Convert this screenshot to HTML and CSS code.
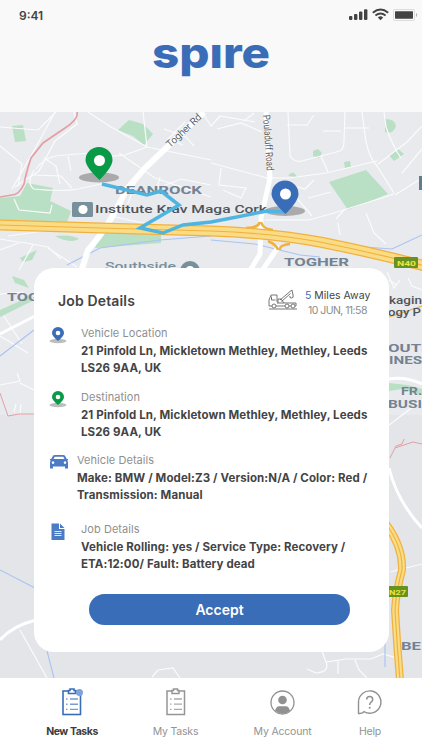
FILE: index.html
```html
<!DOCTYPE html>
<html lang="en">
<head>
  <meta charset="UTF-8">
  <meta name="viewport" content="width=device-width, initial-scale=1.0">
  <title>Spire</title>
  <link rel="stylesheet" href="styles.css">
</head>
<body>
  <div class="app">
    <!-- Header -->
    <header class="header">
      <div class="status-bar">
        <span class="time">9:41</span>
        <svg class="status-icons" width="70" height="14" viewBox="0 0 70 14">
          <g fill="#444">
            <rect x="1" y="8" width="3.4" height="4" rx="1"/>
            <rect x="6" y="6" width="3.4" height="6" rx="1"/>
            <rect x="11" y="3.6" width="3.4" height="8.4" rx="1"/>
            <rect x="16" y="1.2" width="3.4" height="10.8" rx="1"/>
            <path d="M29.8 9.400Q32.500 7.300 35.200 9.400L32.500 12.200z"/>
          </g>
          <path d="M24.800 4.800Q32.500 -1.600 40.200 4.800M27.400 7.600Q32.500 3.500 37.600 7.600" fill="none" stroke="#444" stroke-width="1.900"/>
          <rect x="45.500" y="1.500" width="21" height="11" rx="1.500" fill="none" stroke="#ddd"/>
          <rect x="47" y="3.300" width="18" height="7.400" rx=".6" fill="#444"/>
          <path d="M68 5v4q1-.5 1-2t-1-2" fill="#aaa"/>
        </svg>
      </div>
      <svg class="logo" width="126" height="50" viewBox="0 0 126 50" role="img" aria-label="spire">
        <text x="4" y="32" textLength="118" lengthAdjust="spacingAndGlyphs">spıre</text>
      </svg>
    </header>

    <main class="main">
      <!-- Map -->
      <svg class="map" width="422" height="566" viewBox="0 112 422 566">
        <rect x="0" y="112" width="422" height="566" fill="#e8eaed"/>
        <rect x="0" y="415" width="422" height="263" fill="#e3e5e9"/>
        <g fill="#b9dfc4">
          <path d="M27 183L53 188 50 201 71 211 67 222 0 220V198L20 196z"/>
          <path d="M12 126l11-1 3 16-11 1z"/>
          <path d="M118 130l11-10 14 4 10 10-9 11-11-9z"/>
          <path d="M100 232l61 3v8l-66 5z"/>
          <path d="M55 236q17-2 24 3-10 5-24-3M20 258l17-8-5 10-9 2z"/>
          <path d="M329 182l37-12 22 24-40 16z"/>
          <path d="M385 119q10 0 11 7-3 9-11 6zM389 155l9-6 6 5-10 7zM313 151l5-2 4 4-3 5-6-2zM344 162l6-1 1 6-6 1zM288 176q5-7 9 1z"/>
          <path d="M12 276l12 4 5 8-14-5zM0 310l18-8 12-8 2 7-16 8-16 8zM389 383l18 2 15 4v6l-20-6-13 2z"/>
        </g>
        <g class="street">
          <path d="M0 127l38 3 18-18M74 112l3 12-22 17-16 30-24 16M55 112L36 147 12 189M0 146l22 18-4 22"/>
          <path d="M36 169q10-14 29-14l25-2M34 170q-8 14 0 19 28 3 44 0l23-5M44 158l12 8 4 18M33 175l28 1 11 12M68 156l3 15"/>
          <path d="M88 112l23 15 36 20 64 13M147 147l-22 8-22 2M143 112l4 35M164 129l22 8 8 9M185 122l-17 17 15 6"/>
          <path d="M119 153l36 25 56 19M111 216l40 9M156 189l25-10 30 6M136 181l-9 25M160 177l-3 12"/>
          <path d="M14 199l5 11 31 3 2-8M8 236l43-6M0 250l21-8 27 5 13 12M33 245l-14 25M48 248l29 19M0 239l18 3"/>
          <path d="M204 115l7 11 9-10 35 6M217 129l24-6 21 9M244 121l10-8M211 163l60 16M221 168l-2 17 27 3-5 10-18-8"/>
          <path d="M288 112l2 44q5 7 12 5l38-10q4-2 4-10l1-29M287 125h20l7-10M323 131h18M345 128h24"/>
          <path d="M362 112l4 30q4 17 11 24l17 27M384 112l2 15q7 20 15 31M422 126l-15 16-29 22M377 161l-51 12-37 5h-24M321 156l7 16"/>
          <path d="M395 195l27-17M402 173l20-24M394 194l-28 9-32 10-25 7h-44M314 180l-9 9-15-4M308 198l23-6M295 196l17 20M344 210l-8 9M366 213l8 20 12 11M338 223l2 12"/>
          <path d="M387 272l7 16 6-8M408 278l4 8 10 4M389 280l8 5M389 425l33-25M390 572l32-8"/>
          <path d="M4 316l18 28M0 336l28 17M0 385l20-4-3-8M20 383l14 7M14 412l2-8M20 414l1-10M0 294l24-2M20 630l27 48"/>
          <path d="M322 651l4 11 20-3 25 0 12-5 14 4M326 662q4 10-10 11M338 661v13M355 660l4 10 8 8M307 669l9 4M152 677l6-7 15-2 7 10"/>
        </g>
        <g class="border">
          <path stroke-width="1.700" d="M77 112q2 7-12 16l-22 15-12 15q-5 15-7 26-5 11-12 11l-12 2"/>
          <path d="M0 393l8 23 11-2h15M395 448l18-6 9 2M390 458l4-8 2-4 6-2 2-5"/>
        </g>
        <g class="stream">
          <path d="M0 356l34-26M0 570l35 18M47 651l7 27M385 643v24M67 265l33-17 60-8 51-4M211 240l44 4 45 11 20 2M350 246l42 3 30-14"/>
        </g>
        <g class="road">
          <path stroke-width="6" d="M204 112L145 168 126 190Q109 227 88 250L80 275"/>
          <path stroke-width="5" d="M266 112l4 66-9 40-1 36-12 20M279 246l-18 26"/>
          <path stroke-width="3" d="M0 334l35-18M0 640q12-14 36-20M389 468q8 33 33 60M388 379q18-3 34 5"/>
        </g>

        <!-- N40 and N27 -->
        <path class="hw-edge ramp" d="M246 228q12 0 14-6M261 222q2 7 12 8M278 250q-1-5-10-9M280 250q-1-5 10-6"/>
        <path class="hw-edge" d="M0 225L100 228 211 231Q270 233 320 242 370 252 425 266"/>
        <path class="hw-fill" d="M0 225L100 228 211 231Q270 233 320 242 370 252 425 266"/>
        <path class="hw-line" d="M0 225L100 228 211 231Q270 233 320 242 370 252 425 266"/>
        <path class="hw-edge n27-edge" d="M386 524q17 23 16 46-6 22-7 40 2 35 5 70"/>
        <path class="hw-fill n27" d="M386 524q17 23 16 46-6 22-7 40 2 35 5 70"/>
        <path class="hw-line" d="M386 524q17 23 16 46-6 22-7 40 2 35 5 70"/>
        <path class="hw-line" d="M389 317l33-11"/>
        <rect x="394" y="257" width="24" height="11" rx="1" fill="#679221"/>
        <text class="shield" x="397" y="265.500" textLength="19" lengthAdjust="spacingAndGlyphs">N40</text>
        <rect x="384" y="586" width="24" height="11" rx="1" fill="#679221"/>
        <text class="shield" x="389" y="594.500" textLength="17" lengthAdjust="spacingAndGlyphs">N27</text>

        <!-- Place names -->
        <text class="road-name" transform="translate(170 148) rotate(-43)" textLength="44">Togher Rd</text>
        <text class="road-name" transform="translate(263 115) rotate(86)" textLength="56" lengthAdjust="spacingAndGlyphs">Pouladuff Road</text>
        <text class="area" x="115" y="194" textLength="87" lengthAdjust="spacingAndGlyphs">DEANROCK</text>
        <text class="area" x="284" y="266" textLength="65" lengthAdjust="spacingAndGlyphs">TOGHER</text>
        <text class="area" x="7" y="301" textLength="32" lengthAdjust="spacingAndGlyphs">TOG</text>
        <text class="area" x="388" y="352" textLength="38" lengthAdjust="spacingAndGlyphs">OUTI</text>
        <text class="area" x="389" y="364" textLength="33" lengthAdjust="spacingAndGlyphs">INES</text>
        <text class="area" x="401" y="395" textLength="21" lengthAdjust="spacingAndGlyphs">FR.</text>
        <text class="area" x="388" y="408" textLength="34" lengthAdjust="spacingAndGlyphs">BUSI</text>
        <text class="area" x="401" y="650" textLength="20" lengthAdjust="spacingAndGlyphs">BE</text>
        <text class="place" x="95" y="213" textLength="172" lengthAdjust="spacingAndGlyphs">Institute Krav Maga Cork</text>
        <text class="place" x="389" y="304" textLength="33" lengthAdjust="spacingAndGlyphs">kagin</text>
        <text class="place" x="388" y="316" textLength="33" lengthAdjust="spacingAndGlyphs">ogy P</text>
        <text class="place muted" x="105" y="270" textLength="71" lengthAdjust="spacingAndGlyphs">Southside</text>
        <rect x="72" y="202" width="21" height="15" rx="1.500" fill="#78909c"/>
        <circle cx="83" cy="209.500" r="4.600" fill="#fff"/>
        <circle cx="190" cy="271" r="10" fill="#78909c"/>
        <circle cx="190" cy="270" r="4" fill="#fff"/>
        <rect x="419" y="176" width="6" height="14" fill="#607d8b"/>

        <!-- Route -->
        <ellipse cx="99" cy="177.500" rx="20" ry="5" fill="#aaa9ac"/>
        <ellipse cx="285" cy="211" rx="20" ry="5" fill="#aaa9ac"/>
        <path class="route" d="M102 184l45 11 14-4 18 14-39 23 23 5 20-8 28-3 56-11 19 1"/>
        <path fill="#089a46" d="M99.500 180q-14-13-14-20a13.500 13 0 0 1 27 0q0 7-13 20z"/>
        <path fill="#3a6db8" d="M285.500 214q-14-13-14-20a13.500 13.500 0 0 1 27 0q0 7-13 20z"/>
        <circle cx="99.500" cy="160.500" r="5.500" fill="#fff"/>
        <circle cx="285.500" cy="194" r="5.500" fill="#fff"/>
      </svg>

      <!-- Job card -->
      <section class="card">
        <div class="card-top">
          <h1>Job Details</h1>
          <svg class="truck" width="30" height="22" viewBox="0 0 30 22">
            <g fill="none" stroke="#666" stroke-width=".9">
              <path d="M1 17v-6l2-5h6v7M3.500 7.500v3.500h4M1 17h3M8 17h9M21 17h2M27 17h1v-3H9M10 14v-4h3l3 4"/>
              <path d="M12 11L22 2.500l2-1.500 1 5M13.500 12.500l9-8M25 6q1 3-1.500 3t-1.500-2"/>
              <circle cx="6" cy="17" r="2"/><circle cx="19" cy="17" r="2"/><circle cx="25" cy="17" r="2"/>
              <path d="M1 20h28"/>
            </g>
          </svg>
          <div class="meta">
            <p class="miles"><b>5</b> Miles Away</p>
            <p class="date">10 JUN, 11:58</p>
          </div>
        </div>

        <div class="item">
          <svg class="item-icon" width="18" height="18" viewBox="0 0 18 18">
            <ellipse cx="9" cy="14" rx="8.500" ry="2.200" fill="#bdbdbd"/>
            <path fill="#3a6db8" d="M9 14Q3 9 3 6a6 6 0 0 1 12 0q0 3-6 8"/>
            <circle cx="9" cy="6" r="2.300" fill="#fff"/>
          </svg>
          <div>
            <p class="label">Vehicle Location</p>
            <p class="value">21 Pinfold Ln, Mickletown Methley, Methley, Leeds<br>LS26 9AA, UK</p>
          </div>
        </div>
        <div class="item">
          <svg class="item-icon" width="18" height="18" viewBox="0 0 18 18">
            <ellipse cx="9" cy="14" rx="8.500" ry="2.200" fill="#bdbdbd"/>
            <path fill="#089a46" d="M9 14Q3 9 3 6a6 6 0 0 1 12 0q0 3-6 8"/>
            <circle cx="9" cy="6" r="2.300" fill="#fff"/>
          </svg>
          <div>
            <p class="label">Destination</p>
            <p class="value">21 Pinfold Ln, Mickletown Methley, Methley, Leeds<br>LS26 9AA, UK</p>
          </div>
        </div>
        <div class="item vehicle">
          <svg class="item-icon" width="20" height="16" viewBox="0 0 20 16">
            <path fill="#4a7bc4" fill-rule="evenodd" d="M2.200 5L4 1.800Q4.500 1 6 1h8q1.500 0 2 .8L17.800 5H19v1.500h-1q1 1 1 2V14.500h-3V12.500h-12V14.500h-3V8.500q0-1 1-2h-1V5zM4.500 5h11L14.300 2.800H5.700zM4 7.300a1.300 1.300 0 1 0 .01 0M16 7.300a1.300 1.300 0 1 0 .01 0"/>
          </svg>
          <div>
            <p class="label">Vehicle Details</p>
            <p class="value">Make: BMW / Model:Z3 / Version:N/A / Color: Red /<br>Transmission: Manual</p>
          </div>
        </div>
        <div class="item job">
          <svg class="item-icon" width="14" height="18" viewBox="0 0 14 18">
            <path fill="#4a7bc4" d="M.5.500H8V6h5.500v11H.5zM9 .500L13.500 5H9z"/>
            <path stroke="#dfe8f5" d="M3.500 8.500h7M3.500 10.500h7M3.500 12.500h7"/>
          </svg>
          <div>
            <p class="label">Job Details</p>
            <p class="value">Vehicle Rolling: yes / Service Type: Recovery /<br>ETA:12:00/ Fault: Battery dead</p>
          </div>
        </div>
        <button class="accept" type="button">Accept</button>
      </section>
    </main>

    <!-- Bottom navigation -->
    <nav class="nav">
      <a class="tab active">
        <svg width="22" height="28" viewBox="0 0 22 28">
          <g fill="none" stroke="#3a6db8" stroke-width="1.600">
            <rect x="2" y="3" width="17.500" height="23.500"/>
            <path d="M7.500 5.500V2.500H9V1h4v1.500h1.500v3z" fill="#fff"/>
            <path stroke="#7a9bd0" stroke-width="1.400" d="M5 11h1.500M9 11h8M5 16.200h1.500M9 16.200h8M5 21.400h1.500M9 21.400h8"/>
          </g>
          <circle cx="18.500" cy="4.500" r="3.500" fill="#7da3dc"/>
        </svg>
        <span>New Tasks</span>
      </a>
      <a class="tab">
        <svg width="22" height="28" viewBox="0 0 22 28">
          <g fill="none" stroke="#959595" stroke-width="1.500">
            <rect x="2" y="3" width="17.500" height="23.500"/>
            <path d="M7 5.500V2.500H8.500V1h4v1.500h1.500v3z" fill="#fff"/>
            <path stroke="#aaa" stroke-width="1.300" d="M5 11h1.500M9 11h8M5 16.200h1.500M9 16.200h8M5 21.400h1.500M9 21.400h8"/>
          </g>
        </svg>
        <span>My Tasks</span>
      </a>
      <a class="tab">
        <svg width="26" height="28" viewBox="0 0 26 28">
          <circle cx="12.500" cy="14.500" r="11.500" fill="none" stroke="#919191" stroke-width="1.300"/>
          <circle cx="12.500" cy="12" r="4.300" fill="#919191"/>
          <path fill="#919191" d="M5 23q1-4.800 4-4.800h7q3 0 4 4.800-7 5.500-15 0"/>
        </svg>
        <span>My Account</span>
      </a>
      <a class="tab">
        <svg width="26" height="28" viewBox="0 0 26 28">
          <path fill="none" stroke="#919191" stroke-width="1.400" d="M1.500 25.500V14A11.200 11.200 0 1 1 7 23.700Q5 25.800 1.500 25.500z"/>
          <path fill="none" stroke="#919191" stroke-width="1.500" d="M9.700 11.500q0-3 3-3t3 3q0 1.500-1.500 2.700-1.500 1-1.500 2.800"/>
          <circle cx="12.700" cy="19.800" r="1" fill="#919191"/>
        </svg>
        <span>Help</span>
      </a>
    </nav>
  </div>
</body>
</html>
```

FILE: styles.css
```css
* {
  box-sizing: border-box;
}

body {
  margin: 0;
  font-family: Inter, "Open Sans", sans-serif;
  color: #444;
  background: #fff;
}

p, h1 {
  margin: 0;
}

.app {
  width: 422px;
  height: 750px;
  display: grid;
  grid-template-rows: 112px 566px 72px;
  overflow: hidden;
}

/* Header */
.header {
  background: #f9f9f9;
  display: flex;
  flex-direction: column;
  align-items: center;
}

.status-bar {
  width: 100%;
  height: 30px;
  padding: 0 4px 0 19px;
  display: flex;
  justify-content: space-between;
  align-items: center;
}

.time {
  font-size: 12px;
  font-weight: 600;
}

.logo {
  margin-top: 6px;
  overflow: visible;
}

.logo text {
  font-size: 42px;
  font-weight: 800;
  fill: #3a6db8;
}

/* Map and card share the same cell */
.main {
  display: grid;
}

.map, .card {
  grid-area: 1 / 1;
}

.street, .road, .border, .stream, .route, .hw-edge, .hw-fill, .hw-line {
  fill: none;
}

.street {
  stroke: #fafbfc;
  stroke-width: 1.2;
}

.road {
  stroke: #fff;
}

.border {
  stroke: #e2a0a5;
  stroke-width: 1;
}

.stream {
  stroke: #a9c3f2;
  stroke-width: 1.1;
}

.hw-edge {
  stroke: #f0b23e;
  stroke-width: 11;
}

.ramp {
  stroke-width: 2.5;
}

.hw-fill {
  stroke: #fbdc86;
  stroke-width: 8.5;
}

.n27-edge {
  stroke-width: 8;
}

.n27 {
  stroke-width: 5.5;
}

.hw-line {
  stroke: #f0b23e;
  stroke-width: 1.2;
}

.shield {
  font: 700 8px Roboto, sans-serif;
  fill: #e9e63c;
}

.road-name {
  font: 10px Roboto, sans-serif;
  fill: #5a5f64;
}

.area {
  font: 700 10px Roboto, sans-serif;
  fill: #748291;
}

.place {
  font: 500 11.5px Roboto, sans-serif;
  fill: #50545a;
}

.muted {
  fill: #78909c;
}

.route {
  stroke: #4fb5e0;
  stroke-width: 3.5;
}

/* Job card */
.card {
  width: 355px;
  height: 384px;
  margin: 156px 0 0 34px;
  padding: 20px 0 0 15px;
  background: #fff;
  border-radius: 20px;
}

.card-top {
  display: flex;
  height: 37px;
}

.card-top h1 {
  width: 209px;
  padding: 4px 0 0 9px;
  font-size: 14px;
  line-height: 18px;
  font-weight: 600;
  letter-spacing: 0.15px;
}

.truck {
  margin: 1px 7px 0 10px;
}

.meta {
  font-size: 10.5px;
  line-height: 15px;
}

.miles b {
  color: #3a6db8;
  font-weight: 400;
}

.date {
  padding-left: 3px;
  color: #8c8c8c;
  letter-spacing: -0.55px;
}

.item {
  display: grid;
  grid-template-columns: 32px 1fr;
  height: 63.5px;
}

.item-icon {
  margin-top: 2px;
}

.label {
  font-size: 11px;
  line-height: 17px;
  color: #8f8f8f;
  letter-spacing: 0.05px;
}

.value {
  padding-top: 1px;
  font-size: 11.5px;
  line-height: 17.3px;
  font-weight: 700;
  letter-spacing: 0.1px;
  white-space: nowrap;
}

.vehicle {
  grid-template-columns: 28px 1fr;
  height: 69px;
}

.job {
  height: 73px;
}

.job .item-icon {
  margin-left: 2px;
}

.accept {
  display: block;
  width: 261px;
  height: 31px;
  margin-left: 40px;
  border: none;
  border-radius: 16px;
  background: #3a6db8;
  color: #fff;
  font: 600 14px Inter, sans-serif;
}

/* Bottom navigation */
.nav {
  display: grid;
  grid-template-columns: 144px 63px 151px 24px;
  justify-content: start;
  background: #fff;
}

.tab {
  display: flex;
  flex-direction: column;
  align-items: center;
  padding-top: 10px;
  gap: 9px;
  font-size: 10.5px;
  line-height: 14px;
  letter-spacing: -0.2px;
  color: #939393;
  white-space: nowrap;
}

.active {
  color: #3c3c3c;
  font-weight: 700;
  letter-spacing: -0.45px;
}
```
